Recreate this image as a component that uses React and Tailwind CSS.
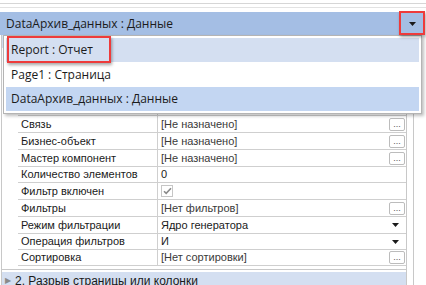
import React from 'react'

const rows = [
  { label: 'Связь', value: '[Не назначено]', kind: 'btn', h: 'h-[17px]' },
  { label: 'Бизнес-объект', value: '[Не назначено]', kind: 'btn', h: 'h-[17px]' },
  { label: 'Мастер компонент', value: '[Не назначено]', kind: 'btn', h: 'h-[17px]' },
  { label: 'Количество элементов', value: '0', h: 'h-[16px]' },
  { label: 'Фильтр включен', kind: 'check', h: 'h-[17px]' },
  { label: 'Фильтры', value: '[Нет фильтров]', kind: 'btn', h: 'h-[17px]' },
  { label: 'Режим фильтрации', value: 'Ядро генератора', kind: 'drop', h: 'h-[17px]' },
  { label: 'Операция фильтров', value: 'И', kind: 'drop', h: 'h-[16px]' },
  { label: 'Сортировка', value: '[Нет сортировки]', kind: 'btn', h: 'h-[16px]' },
]

// rows that sit under the open popup
const hidden = [1, 2, 3, 4]

function Arrow() {
  return (
    <svg width="7" height="4" viewBox="0 0 7 4">
      <path d="M0 0h7L3.5 4z" fill="#1a1a1a" />
    </svg>
  )
}

function DotsButton() {
  return (
    <div className="w-[16px] h-[13px] border border-[#bcbcbc] rounded-[2px] bg-white flex items-end justify-center text-[9px] leading-[9px] text-[#555] pb-[1px]">
      ...
    </div>
  )
}

function Row({ row }) {
  return (
    <div className={`flex ${row.h || 'h-[17px]'} pl-[16px]`}>
      <div className="flex flex-1 border-b border-[#cfcfcf]">
        <div className="w-[140px] border-r border-[#cfcfcf] pl-[3px] flex items-center text-[#1a1a1a]">
          {row.label}
        </div>
        <div className="flex-1 flex items-center pl-[3px] pr-[1px]">
          {row.kind === 'check' ? (
            <div className="w-[12px] h-[12px] border border-[#c6c6c6] flex items-center justify-center">
              <svg width="9" height="8" viewBox="0 0 9 8">
                <path d="M1 4.2l2.2 2.2L8 1.2" stroke="#8a8a8a" strokeWidth="1.6" fill="none" />
              </svg>
            </div>
          ) : (
            <span className={row.kind === 'drop' || row.value === '0' ? 'text-[#1a1a1a]' : 'text-[#3a3a3a]'}>
              {row.value}
            </span>
          )}
          <div className="flex-1" />
          {row.kind === 'btn' && <DotsButton />}
          {row.kind === 'drop' && (
            <div className="w-[16px] flex justify-center pr-[3px]">
              <Arrow />
            </div>
          )}
        </div>
      </div>
    </div>
  )
}

export default function App() {
  return (
    <div className="relative w-[426px] h-[285px] overflow-hidden bg-white" style={{ fontFamily: '"Liberation Sans", Arial, sans-serif' }}>
      {/* top strip */}
      <div className="h-[12px] relative">
        <div className="absolute left-0 right-0 top-[3px] border-t border-[#d6d6d6]" />
        <div className="absolute left-0 right-0 top-[7px] border-t border-[#e2e2e2]" />
      </div>

      {/* combo header */}
      <div className="h-[23px] bg-[#a4bee4] flex items-center pl-[6px] text-[12px] text-[#1b1b1b] mr-[3px]" style={{ fontFamily: '"Open Sans", "Noto Sans", sans-serif' }}>
        <span className="flex-1">DataАрхив_данных : Данные</span>
        <div className="w-[22px] h-[23px] flex items-center justify-center">
          <Arrow />
        </div>
      </div>

      {/* property grid */}
      <div className="flex text-[11px]">
        <div className="w-[406px] border-l border-[#c8c8c8] ml-[1px] border-r">
          <div className="h-[13px] bg-[#d4dff1]" />
          {hidden.map((h) => (
            <Row key={h} row={{ label: '', value: '', kind: 'btn' }} />
          ))}
          {rows.map((r) => (
            <Row key={r.label} row={r} />
          ))}
          <div className="h-[4px] border-b border-[#c8c8c8]" />
          <div className="h-[17px] mt-[2px] bg-[#d4dff1] flex items-center pl-[3px] text-[12px] text-[#1a1a1a]">
            <span className="text-[8px] text-[#8a8a8a] mr-[4px]">▶</span>
            <span>2. Разрыв страницы или колонки</span>
          </div>
        </div>
        <div className="w-[6px]" />
        <div className="border-l border-[#c8c8c8] flex-1" />
      </div>

      {/* dropdown popup */}
      <div className="absolute left-[3px] top-[35px] w-[419px] bg-white border border-[#b4b4b4] shadow-[2px_2px_3px_rgba(0,0,0,0.25)] p-[2px] text-[12px] text-[#1b1b1b]" style={{ fontFamily: '"Open Sans", "Noto Sans", sans-serif' }}>
        <div className="h-[24px] bg-[#d4dff1] flex items-center pl-[5px]">Report : Отчет</div>
        <div className="h-[25px] flex items-center pl-[5px]">Page1 : Страница</div>
        <div className="h-[24px] bg-[#c3d6f2] flex items-center pl-[5px]">DataАрхив_данных : Данные</div>
      </div>

      {/* highlight boxes */}
      <div className="absolute left-[7px] top-[36px] w-[104px] h-[27px] border-2 border-[#ee3b3b] shadow-[1px_2px_3px_rgba(0,0,0,0.35)]" />
      <div className="absolute left-[399px] top-[11px] w-[26px] h-[24px] border-2 border-[#ee3b3b] shadow-[1px_2px_3px_rgba(0,0,0,0.35)]" />
    </div>
  )
}
